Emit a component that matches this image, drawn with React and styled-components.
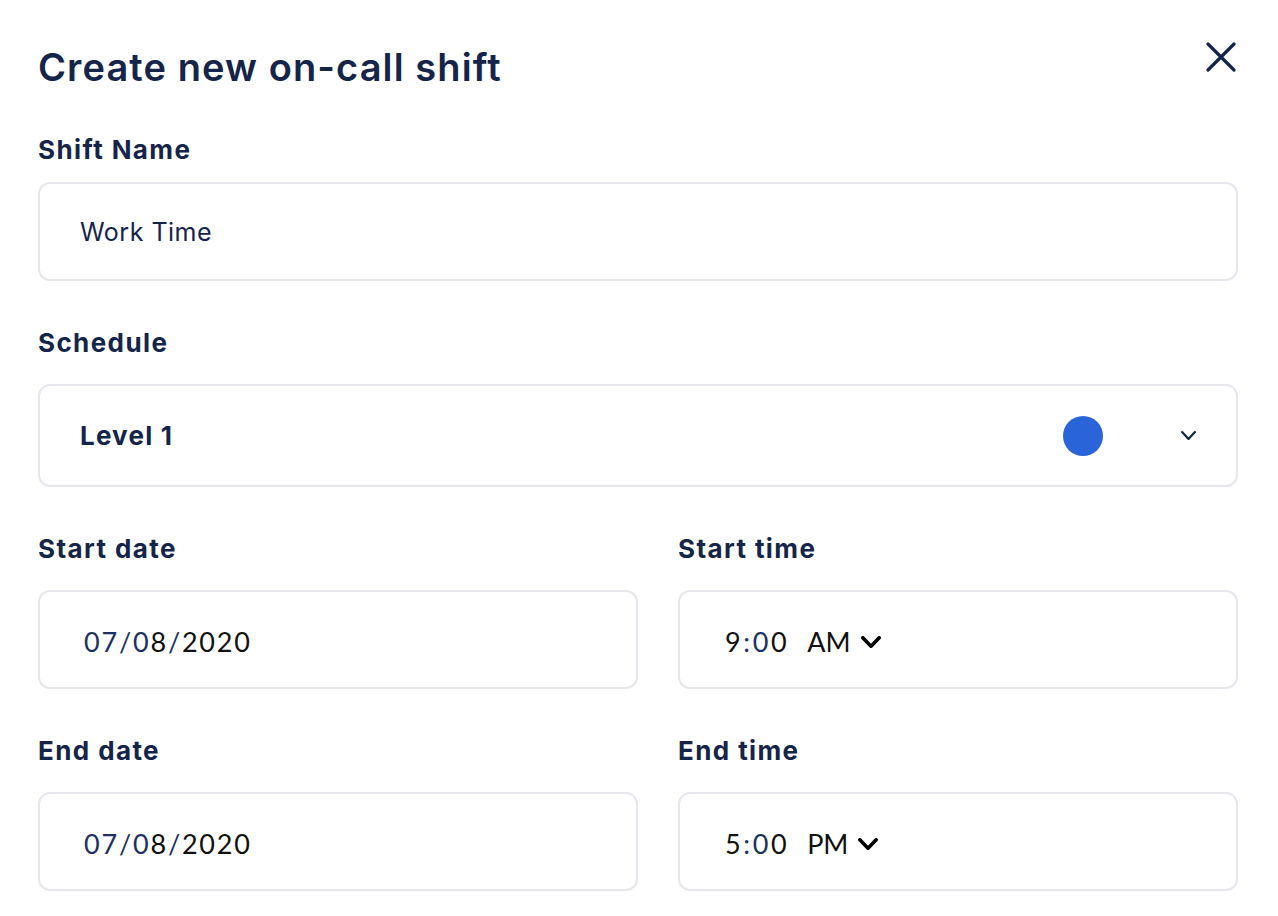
import React from 'react'
import styled, { createGlobalStyle } from 'styled-components'

const GlobalStyle = createGlobalStyle`
body {
  margin: 0;
  background: #ffffff;
  font-family: 'Inter', 'Roboto', sans-serif;
  color: #15254a;
}
`

const Modal = styled.div`
width: 1278px;
box-sizing: border-box;
padding: 44px 40px 0 38px;
`
const Header = styled.div`
display: flex;
justify-content: space-between;
align-items: center;
margin-bottom: 46px;
`
const Title = styled.h1`
margin: 0;
font-size: 38px;
line-height: 46px;
font-weight: 600;
letter-spacing: 1.1px;
color: #15254a;
`
const CloseButton = styled.button`
border: none;
background: none;
padding: 0;
margin-right: 2px;
margin-top: -20px;
cursor: pointer;
display: flex;
`
const Field = styled.div`
margin-bottom: 48px;
`
const Label = styled.div`
font-size: 26px;
line-height: 28px;
font-weight: 700;
letter-spacing: 1.4px;
color: #15254a;
margin-bottom: ${p => (p.tight ? 18 : 27)}px;
`
const Box = styled.div`
box-sizing: border-box;
height: ${p => (p.short ? 99 : 103)}px;
border: 2px solid #e6e7ee;
border-radius: 12px;
display: flex;
align-items: center;
padding: 0 ${p => (p.inset || 40)}px;
font-size: 25px;
letter-spacing: 0.5px;
color: #15254a;
background: #fff;
`
const BoldValue = styled.span`
font-weight: 700;
font-size: 26px;
letter-spacing: 1.2px;
flex: 1;
`
const Dot = styled.span`
width: 40px;
height: 40px;
border-radius: 50%;
background: #2965d9;
margin-right: 78px;
`
const Row = styled.div`
display: grid;
grid-template-columns: 600px 560px;
column-gap: 40px;
`
const NativeText = styled.span`
font-family: 'Lato', 'Noto Sans', sans-serif;
font-size: 27px;
color: #111;
display: flex;
align-items: center;
letter-spacing: 1.8px;
margin-top: 4px;
`
const Seg = styled.span`
color: ${p => (p.active ? '#1b3163' : '#111')};
`
const Hour = styled.span`
letter-spacing: 2.6px;
`
const Meridiem = styled.span`
margin-left: 18px;
margin-right: 10px;
letter-spacing: 0;
`

const Chevron = ({ w = 14, h = 8, stroke = 2, color = '#15254a' }) => (
  <svg width={w} height={h} viewBox={`0 0 ${w} ${h}`} fill="none">
    <path d={`M${stroke / 2} ${stroke / 2} L${w / 2} ${h - stroke / 2} L${w - stroke / 2} ${stroke / 2}`} stroke={color} strokeWidth={stroke} strokeLinecap="round" strokeLinejoin="round" />
  </svg>
)

const DateValue = () => (
  <NativeText>
    <Seg active>07</Seg><Seg active>/</Seg><Seg active>0</Seg><Seg>8</Seg><Seg active>/</Seg><Seg>2020</Seg>
  </NativeText>
)

const TimeValue = ({ hour, ampm }) => (
  <NativeText>
    <Hour>
      <Seg>{hour}</Seg><Seg active>:</Seg><Seg active>0</Seg><Seg>0</Seg>
    </Hour>
    <Meridiem>{ampm}</Meridiem>
    <Chevron w={20} h={12} stroke={3.6} color="#000" />
  </NativeText>
)

export default function App() {
  return (
    <Modal>
      <GlobalStyle />
      <Header>
        <Title>Create new on-call shift</Title>
        <CloseButton>
          <svg width="30" height="30" viewBox="0 0 30 30" fill="none">
            <path d="M2 2 L28 28 M28 2 L2 28" stroke="#15254a" strokeWidth="3.2" strokeLinecap="round" />
          </svg>
        </CloseButton>
      </Header>

      <Field>
        <Label tight>Shift Name</Label>
        <Box short inset={40}>Work Time</Box>
      </Field>

      <Field>
        <Label>Schedule</Label>
        <Box inset={40}>
          <BoldValue>Level 1</BoldValue>
          <Dot />
          <Chevron w={15} h={9} stroke={2.2} />
        </Box>
      </Field>

      <Row>
        <Field>
          <Label>Start date</Label>
          <Box short inset={44}><DateValue /></Box>
        </Field>
        <Field>
          <Label>Start time</Label>
          <Box short inset={45}><TimeValue hour="9" ampm="AM" /></Box>
        </Field>
        <Field>
          <Label>End date</Label>
          <Box short inset={44}><DateValue /></Box>
        </Field>
        <Field>
          <Label>End time</Label>
          <Box short inset={45}><TimeValue hour="5" ampm="PM" /></Box>
        </Field>
      </Row>
    </Modal>
  )
}
